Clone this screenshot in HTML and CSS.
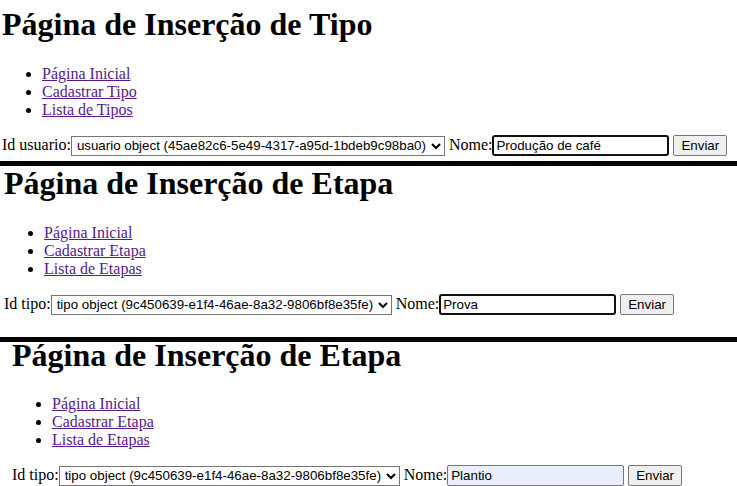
FILE: index.html
```html
<!DOCTYPE html>
<html lang="pt-BR">
<head>
<meta charset="utf-8">
<title>Página de Inserção</title>
<link rel="stylesheet" href="styles.css">
</head>
<body>
  <section class="page page--tipo">
    <h1 class="page-title">Página de Inserção de Tipo</h1>
    <ul class="nav">
      <li><a href="#">Página Inicial</a></li>
      <li><a href="#">Cadastrar Tipo</a></li>
      <li><a href="#">Lista de Tipos</a></li>
    </ul>
    <form class="entry-form">
      <label class="field-label">Id usuario:</label><select class="field-select"><option>usuario object (45ae82c6-5e49-4317-a95d-1bdeb9c98ba0)</option></select> <label class="field-label">Nome:</label><input class="field-input is-focused" type="text" value="Produção de café"> <button class="field-button" type="button">Enviar</button>
    </form>
  </section>
  <div class="divider"></div>
  <section class="page page--etapa">
    <h1 class="page-title">Página de Inserção de Etapa</h1>
    <ul class="nav">
      <li><a href="#">Página Inicial</a></li>
      <li><a href="#">Cadastrar Etapa</a></li>
      <li><a href="#">Lista de Etapas</a></li>
    </ul>
    <form class="entry-form">
      <label class="field-label">Id tipo:</label><select class="field-select"><option>tipo object (9c450639-e1f4-46ae-8a32-9806bf8e35fe)</option></select> <label class="field-label">Nome:</label><input class="field-input is-focused" type="text" value="Prova"> <button class="field-button" type="button">Enviar</button>
    </form>
  </section>
  <div class="divider"></div>
  <section class="page page--etapa2">
    <h1 class="page-title">Página de Inserção de Etapa</h1>
    <ul class="nav">
      <li><a href="#">Página Inicial</a></li>
      <li><a href="#">Cadastrar Etapa</a></li>
      <li><a href="#">Lista de Etapas</a></li>
    </ul>
    <form class="entry-form">
      <label class="field-label">Id tipo:</label><select class="field-select"><option>tipo object (9c450639-e1f4-46ae-8a32-9806bf8e35fe)</option></select> <label class="field-label">Nome:</label><input class="field-input is-autofilled" type="text" value="Plantio"> <button class="field-button" type="button">Enviar</button>
    </form>
  </section>
</body>
</html>
```

FILE: styles.css
```css
html, body {
  margin: 0;
  padding: 0;
  background: #ffffff;
}

body {
  font-family: "Liberation Serif", "Times New Roman", serif;
  font-size: 16px;
  color: #000000;
  overflow: hidden;
}

.page {
  display: flow-root;
}

.page--tipo { padding-left: 2px; }
.page--etapa { padding-left: 4px; }
.page--etapa2 { padding-left: 12px; }

.divider {
  height: 5px;
  background: #000000;
}

.page-title {
  font-size: 32px;
  font-weight: bold;
  line-height: 26px;
  margin: 0 0 28px 0;
}

.page--tipo .page-title { margin-top: 11px; }
.page--etapa .page-title { margin-top: 4px; }
.page--etapa2 .page-title { margin-top: 0; margin-bottom: 27px; }

.nav {
  margin: 0 0 16px 0;
  padding-left: 40px;
  list-style: disc;
}

.nav a {
  color: #551a8b;
  text-decoration: underline;
}

.entry-form {
  margin: 0;
}

.page--tipo .entry-form { margin-bottom: 5px; }
.page--etapa .entry-form { margin-bottom: 22px; }

.field-label {
  font-family: "Liberation Serif", "Times New Roman", serif;
  font-size: 16px;
}

.field-select,
.field-input,
.field-button {
  font-family: "Liberation Sans", Arial, sans-serif;
  font-size: 13.333px;
  color: #000000;
}

.field-select {
  height: 20px;
  padding: 0 1px;
  border: 1px solid #767676;
  border-radius: 0;
  background: #ffffff;
  vertical-align: baseline;
}

.field-input {
  box-sizing: border-box;
  width: 177px;
  height: 21px;
  padding: 1px 3px;
  border: 1px solid #767676;
  border-radius: 2px;
  background: #ffffff;
}

.field-input.is-focused {
  border: 2px solid #101010;
  border-radius: 3px;
  padding: 0 2px;
  outline: none;
}

.field-input.is-autofilled {
  background: #e8f0fe;
}

.field-button {
  box-sizing: border-box;
  height: 21px;
  padding: 1px 7px;
  border: 1px solid #767676;
  border-radius: 2px;
  background: #efefef;
}
```
